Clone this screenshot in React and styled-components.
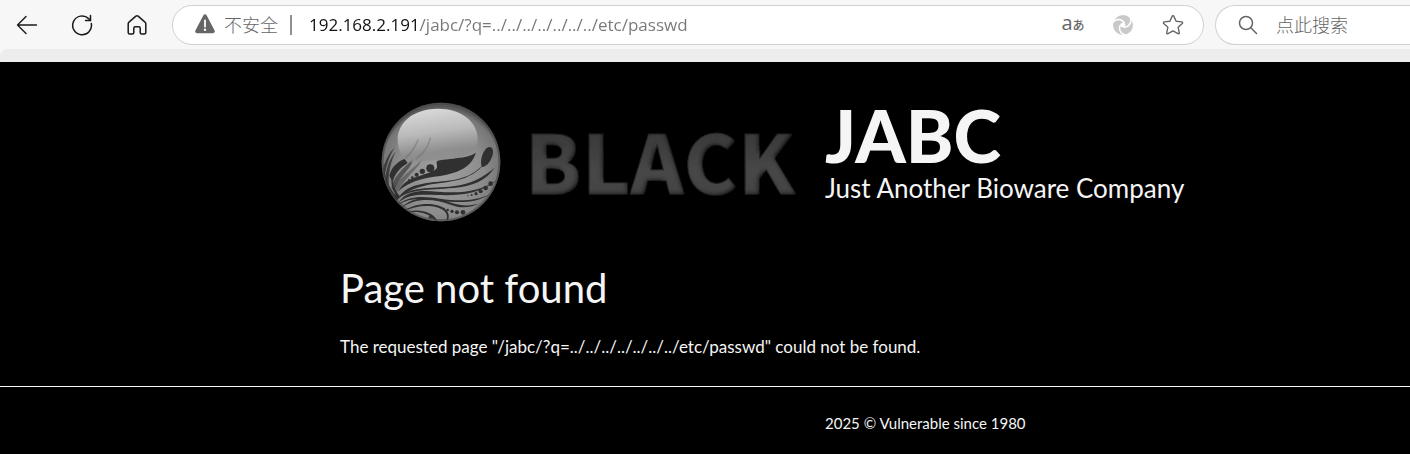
import React, { useState } from "react";
import styled, { createGlobalStyle } from "styled-components";

const GlobalStyle = createGlobalStyle`
  * {
    box-sizing: border-box;
  }
  body {
    margin: 0;
    background: #000;
    color: #f5f5f5;
    font-family: Lato, "Noto Sans CJK SC", sans-serif;
  }
`;

const Browser = styled.header`
  background: #f7f7f7;
  font-family: "Open Sans", "Noto Sans CJK SC", sans-serif;
`;

const Toolbar = styled.div`
  display: flex;
  align-items: center;
  padding: 5px 0 4px 10px;
`;

const NavButtons = styled.nav`
  display: flex;
  gap: 21px;
  margin-right: 18px;
`;

const IconButton = styled.button`
  display: flex;
  align-items: center;
  justify-content: center;
  width: 34px;
  height: 34px;
  padding: 0;
  border: 0;
  background: none;
  color: ${(props) => props.$color || "#1a1a1a"};
  cursor: pointer;
`;

const AddressBar = styled.form`
  flex: 1;
  min-width: 0;
  display: flex;
  align-items: center;
  height: 40px;
  padding: 0 13px 0 21px;
  border: 1px solid #d0d0d0;
  border-radius: 20px;
  background: #fff;
`;

const Security = styled.button`
  display: flex;
  align-items: center;
  gap: 8px;
  padding: 0 0 2px;
  border: 0;
  background: none;
  color: #666;
  font-family: "Noto Sans CJK SC", sans-serif;
  font-size: 18px;
  font-weight: 300;
  line-height: 24px;
  white-space: nowrap;
`;

const Divider = styled.span`
  width: 2px;
  height: 20px;
  margin: 0 17px 0 12px;
  background: #8f8f8f;
`;

/* host part is black, the path after it is grey */
const UrlInput = styled.input`
  flex: 1;
  min-width: 0;
  height: 32px;
  padding: 0 0 2px;
  border: 0;
  outline: 0;
  background: linear-gradient(90deg, #111 110px, #767676 110px);
  background-clip: text;
  -webkit-background-clip: text;
  color: transparent;
  caret-color: #111;
  font-family: inherit;
  font-size: 17px;
`;

const Actions = styled.div`
  display: flex;
  gap: 16px;
`;

const SearchBar = styled.form`
  flex: 0 0 195px;
  min-width: 0;
  display: flex;
  align-items: center;
  gap: 18px;
  height: 40px;
  margin-left: 11px;
  padding-left: 22px;
  border: 1px solid #d0d0d0;
  border-right: 0;
  border-radius: 20px 0 0 20px;
  background: #fff;
  color: #666;
`;

const SearchInput = styled.input`
  flex: 1;
  width: 100%;
  min-width: 0;
  padding: 0 0 2px;
  border: 0;
  outline: 0;
  background: none;
  font-family: "Noto Sans CJK SC", sans-serif;
  font-size: 18px;
  font-weight: 300;
  &::placeholder {
    color: #666;
    opacity: 1;
  }
`;

const Strip = styled.div`
  height: 13px;
  border-top-left-radius: 8px;
  background: #ededed;
`;

const Row = styled.div`
  display: grid;
  grid-template-columns: minmax(16px, 340px) minmax(0, 970px);
`;

const Content = styled.div`
  grid-column: 2;
`;

const Branding = styled.div`
  display: grid;
  grid-template-columns: 485px 1fr;
  padding-top: 36px;
`;

const LogoLink = styled.a`
  display: flex;
  padding-left: 36px;
`;

const SiteName = styled.h1`
  margin: 0;
  font-size: 72px;
  font-weight: 900;
  line-height: 74px;
`;

const Slogan = styled.p`
  margin: 0;
  font-size: 26px;
  line-height: 32px;
  white-space: nowrap;
`;

const Title = styled.h2`
  margin: 30px 0 19px;
  font-size: 40px;
  font-weight: 400;
  line-height: 56px;
`;

const Message = styled.p`
  margin: 0 0 27px;
  font-size: 17px;
  line-height: 24px;
`;

const Footer = styled.footer`
  border-top: 1px solid #f5f5f5;
  padding: 24px 0 18px;
`;

const Copyright = styled.p`
  margin: 0 0 0 485px;
  font-size: 15px;
  line-height: 24px;
`;

const BackIcon = () => (
  <svg width="22" height="22" viewBox="0 0 22 22" fill="none" stroke="currentColor" strokeWidth="1.4" strokeLinecap="round" strokeLinejoin="round">
    <path d="M20.5 11H1.5M10 2.5 1.5 11l8.5 8.5" />
  </svg>
);

const ReloadIcon = () => (
  <svg width="22" height="22" viewBox="0 0 22 22" fill="none" stroke="currentColor" strokeWidth="1.5" strokeLinecap="round" strokeLinejoin="round">
    <path d="M20.3 9.5A9.4 9.4 0 1 1 17.6 4.6l1.8 1.9" />
    <path d="M19.5 1.5v5h-5" />
  </svg>
);

const HomeIcon = () => (
  <svg width="20" height="22" viewBox="0 0 20 22" fill="none" stroke="currentColor" strokeWidth="1.5" strokeLinejoin="round">
    <path d="M8.9 2.1 2 8.1c-.5.4-.8 1-.8 1.7v8.7c0 .9.6 1.5 1.5 1.5h2.6c.9 0 1.5-.6 1.5-1.5v-4.3c0-.8.6-1.4 1.4-1.4h3.6c.8 0 1.4.6 1.4 1.4v4.3c0 .9.6 1.5 1.5 1.5h2.6c.9 0 1.5-.6 1.5-1.5V9.8c0-.7-.3-1.3-.8-1.7l-6.9-6c-.7-.5-1.5-.5-2.2 0z" />
  </svg>
);

const WarningIcon = () => (
  <svg width="22" height="20" viewBox="0 0 22 20">
    <path d="M9.4 1.3c.7-1.3 2.5-1.3 3.2 0l8 15.3c.7 1.2-.1 2.6-1.5 2.6H2.9c-1.4 0-2.2-1.4-1.5-2.6z" fill="#666" />
    <path d="M11 6.5v6" stroke="#fff" strokeWidth="1.8" strokeLinecap="round" />
    <circle cx="11" cy="15.7" r="1.2" fill="#fff" />
  </svg>
);

const TranslateLabel = styled.span`
  display: flex;
  align-items: baseline;
  padding-bottom: 2px;
  font-family: "Open Sans", "Noto Sans CJK JP", sans-serif;
  font-size: 20px;
  line-height: 20px;
  small {
    font-size: 12px;
    font-weight: 500;
  }
`;

const SwirlIcon = () => (
  <svg width="22" height="22" viewBox="0 0 22 22">
    <circle cx="11" cy="11" r="10" fill="#c9c9c9" />
    <circle cx="11" cy="11" r="2.4" fill="#fff" />
    <g fill="none" stroke="#fff" strokeWidth="1.5">
      <path d="M12.4 9.2C10.500 5 4.500 4 .5 8.500" />
      <path d="M12.4 9.2C10.500 5 4.500 4 .5 8.500" transform="rotate(120 11 11)" />
      <path d="M12.4 9.2C10.500 5 4.500 4 .5 8.500" transform="rotate(240 11 11)" />
    </g>
  </svg>
);

const StarIcon = () => (
  <svg width="22" height="22" viewBox="0 0 22 22" fill="none" stroke="currentColor" strokeWidth="1.4" strokeLinejoin="round">
    <path d="M10.2 2.1c.3-.7 1.3-.7 1.6 0l2.3 5.2 5.7.6c.8.1 1.1 1 .5 1.5l-4.2 3.8 1.2 5.6c.2.8-.6 1.3-1.3.9L11 16.9l-5 2.8c-.7.4-1.5-.1-1.3-.9l1.2-5.6-4.2-3.8c-.6-.5-.3-1.4.5-1.5l5.7-.6z" />
  </svg>
);

const SearchIcon = () => (
  <svg width="20" height="20" viewBox="0 0 20 20" fill="none" stroke="currentColor" strokeWidth="1.5" strokeLinecap="round">
    <circle cx="8" cy="8" r="6.5" />
    <path d="m12.8 12.8 5.7 5.7" />
  </svg>
);

const Logo = () => (
  <svg width="436" height="132" viewBox="0 0 436 132" role="img" aria-label="Black">
    <defs>
      <radialGradient id="ball" cx="0.5" cy="0.58" r="0.55">
        <stop offset="0" stopColor="#a0a0a0" />
        <stop offset="0.65" stopColor="#8c8c8c" />
        <stop offset="0.92" stopColor="#777" />
        <stop offset="1" stopColor="#555" />
      </radialGradient>
      <linearGradient id="gloss" x1="0.3" y1="0" x2="0.5" y2="1">
        <stop offset="0" stopColor="#dadada" />
        <stop offset="0.45" stopColor="#bababa" />
        <stop offset="0.8" stopColor="#8f8f8f" stopOpacity="0.95" />
        <stop offset="1" stopColor="#858585" stopOpacity="0.4" />
      </linearGradient>
      <linearGradient id="word" x1="0" y1="0" x2="0" y2="1">
        <stop offset="0" stopColor="#2e2e2e" />
        <stop offset="0.6" stopColor="#474747" />
        <stop offset="1" stopColor="#404040" />
      </linearGradient>
      <filter id="bevel" x="-5%" y="-5%" width="110%" height="110%">
        <feGaussianBlur in="SourceAlpha" stdDeviation="2" result="soft" />
        <feOffset in="soft" dx="-2" dy="-2" result="shift" />
        <feComposite in="SourceGraphic" in2="shift" operator="in" result="face" />
        <feFlood floodColor="#0c0c0c" />
        <feComposite in2="SourceAlpha" operator="in" result="dark" />
        <feMerge>
          <feMergeNode in="dark" />
          <feMergeNode in="face" />
        </feMerge>
      </filter>
      <clipPath id="ballClip">
        <circle cx="213" cy="216" r="178" />
      </clipPath>
    </defs>
    {/* sphere is drawn on a 3x grid */}
    <g transform="translate(-6 -8) scale(0.3333)">
      <circle cx="213" cy="216" r="178" fill="url(#ball)" />
      <g clipPath="url(#ballClip)" fill="#303030">
        <path d="M58 258C62 235 82 214 104 207l9 12C92 232 75 250 68 275z" />
        <path d="M36 245c8-31 22-57 38-73-16 28-27 57-30 91zM46 285c-2-42 11-77 31-100-15 30-24 65-20 108z" opacity="0.8" />
        <path d="M64 293c7-35 39-60 64-85-2 29-42 50-56 97z" opacity="0.6" />
        <path d="M69 300c14-36 61-62 85-90-6 22-43 46-74 98z" opacity="0.4" />
        <path d="M203 212c37-9 84-4 115-24-13 38-37 50-72 62-35 12-72 9-111 24-23 10-42 20-52 33 12-28 37-42 68-50 26-10 54-13 50-31-1-7-3-10 2-14z" />
        <path d="M350 174c15-10 24 5 17 24-7 21-20 33-31 33-6-13-2-41 14-57z" />
        <path d="M338 228c-53 55-115 44-177 60-39 10-64 23-80 42 15-29 41-43 78-49 62-12 123 0 177-53z" />
        <path d="M374 233c-26 39-67 56-124 61-73 6-132 2-170 36 36-44 102-32 169-41 56-8 91-27 125-56z" />
        <path d="M385 267c-58 48-120 50-184 48-47-2-86-4-116 23 26-38 69-37 118-33 69 5 126 2 182-38z" />
        <path d="M363 311c-48 31-99 27-154 21-49-6-88-11-127 14 34-31 80-27 128-20 58 8 106 8 153-15z" />
        <path d="M330 340c-30 15-61 15-89 4-48-18-103-24-151 12 44-45 108-34 156-17 29 9 55 10 84 1z" />
        <path d="M229 391c17-43-69-58-131-26 54-41 156-24 136 26zM193 390c-20-25-60-29-99-18 45-20 91-10 108 20z" />
        <path d="M79 333c-29-27-36-66-37-96 7 42 22 68 45 88zM84 326c-20-30-22-47-18-74 1 30 8 49 24 67z" />
        <circle cx="181" cy="235" r="12" />
        <circle cx="157" cy="244" r="8" />
        <circle cx="140" cy="254" r="6" />
        <circle cx="127" cy="263" r="4" />
        <circle cx="117" cy="270" r="3" />
        <circle cx="362" cy="281" r="7" />
        <circle cx="347" cy="294" r="7" />
        <circle cx="332" cy="304" r="6" />
        <circle cx="318" cy="311" r="5" />
        <circle cx="305" cy="315" r="3" />
        <circle cx="294" cy="317" r="2" />
        <circle cx="279" cy="367" r="7" />
        <circle cx="261" cy="367" r="6" />
        <circle cx="246" cy="364" r="5" />
        <circle cx="233" cy="360" r="4" />
        <circle cx="222" cy="356" r="3" />
        <ellipse cx="184" cy="382" rx="9" ry="4" />
      </g>
      <path d="M83 150c0-57 53-94 121-94 69 0 120 39 119 92-1 37-43 59-112 62-48 1-70 8-93 5-20-5-35-37-35-65z" fill="url(#gloss)" />
      <path d="M106 205c19-16 28-31 39-57M137 207c27-18 39-40 45-65" stroke="#555" strokeWidth="5" fill="none" opacity="0.3" />
      <circle cx="213" cy="216" r="175" fill="none" stroke="#444" strokeWidth="6" opacity="0.6" />
    </g>
    <text
      x="149"
      y="97"
      fill="url(#word)"
      stroke="#252525"
      strokeWidth="1"
      fontFamily="'Noto Sans CJK SC', sans-serif"
      fontWeight="900"
      fontSize="82"
      filter="url(#bevel)"
    >
      BLACK
    </text>
  </svg>
);

const App = () => {
  const [url, setUrl] = useState("192.168.2.191/jabc/?q=../../../../../../../etc/passwd");
  const [search, setSearch] = useState("");

  const handleSubmit = (e) => {
    e.preventDefault();
  };

  return (
    <>
      <GlobalStyle />
      <Browser>
        <Toolbar>
          <NavButtons aria-label="浏览器">
            <IconButton type="button" aria-label="返回">
              <BackIcon />
            </IconButton>
            <IconButton type="button" aria-label="刷新">
              <ReloadIcon />
            </IconButton>
            <IconButton type="button" aria-label="主页">
              <HomeIcon />
            </IconButton>
          </NavButtons>
          <AddressBar onSubmit={handleSubmit}>
            <Security type="button">
              <WarningIcon />
              不安全
            </Security>
            <Divider />
            <UrlInput
              type="text"
              aria-label="地址"
              spellCheck={false}
              value={url}
              onChange={(e) => setUrl(e.target.value)}
            />
            <Actions>
              <IconButton type="button" aria-label="翻译" $color="#666">
                <TranslateLabel>
                  a<small>あ</small>
                </TranslateLabel>
              </IconButton>
              <IconButton type="button" aria-label="扩展">
                <SwirlIcon />
              </IconButton>
              <IconButton type="button" aria-label="收藏" $color="#666">
                <StarIcon />
              </IconButton>
            </Actions>
          </AddressBar>
          <SearchBar onSubmit={handleSubmit}>
            <SearchIcon />
            <SearchInput
              type="text"
              aria-label="搜索"
              placeholder="点此搜索"
              value={search}
              onChange={(e) => setSearch(e.target.value)}
            />
          </SearchBar>
        </Toolbar>
        <Strip />
      </Browser>
      <Row as="main">
        <Content>
          <Branding>
            <LogoLink href="#" aria-label="JABC">
              <Logo />
            </LogoLink>
            <div>
              <SiteName>JABC</SiteName>
              <Slogan>Just Another Bioware Company</Slogan>
            </div>
          </Branding>
          <Title>Page not found</Title>
          <Message>
            The requested page "/jabc/?q=../../../../../../../etc/passwd" could not be found.
          </Message>
        </Content>
      </Row>
      <Footer>
        <Row>
          <Content>
            <Copyright>2025 © Vulnerable since 1980</Copyright>
          </Content>
        </Row>
      </Footer>
    </>
  );
};

export default App;
